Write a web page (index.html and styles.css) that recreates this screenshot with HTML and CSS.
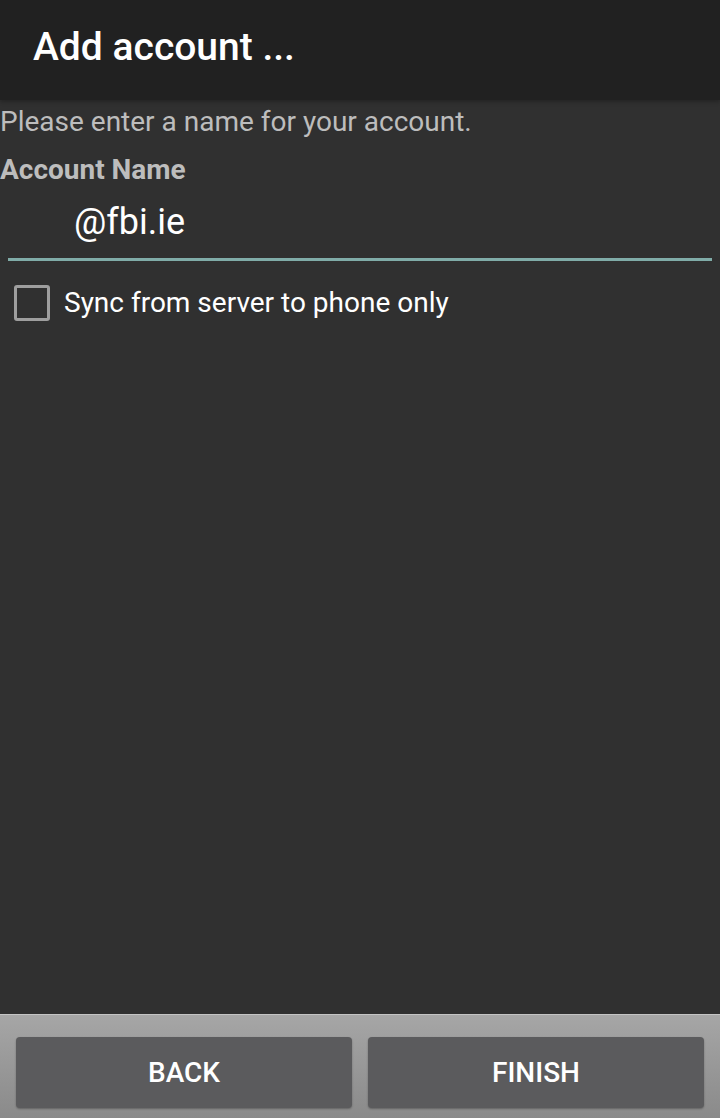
FILE: index.html
```html
<!DOCTYPE html>
<html lang="en">
<head>
    <meta charset="UTF-8">
    <meta name="viewport" content="width=device-width, initial-scale=1.0">
    <title>Add account</title>
    <link rel="stylesheet" href="styles.css">
</head>
<body>
    <div class="screen">
        <header class="app-bar">
            <h1>Add account ...</h1>
        </header>

        <main class="content">
            <p class="hint">Please enter a name for your account.</p>
            <label class="field-label" for="account-name">Account Name</label>
            <div class="field">
                <input id="account-name" class="field-input" type="text" value="@fbi.ie">
            </div>
            <label class="check-row">
                <span class="check-box"></span>
                <span class="check-text">Sync from server to phone only</span>
            </label>
        </main>

        <footer class="button-bar">
            <button class="bar-btn">BACK</button>
            <button class="bar-btn">FINISH</button>
        </footer>
    </div>
</body>
</html>
```

FILE: styles.css
```css
* {
    margin: 0;
    padding: 0;
    box-sizing: border-box;
}

html, body {
    height: 100%;
}

body {
    font-family: Roboto, 'Noto Sans', sans-serif;
    background-color: #303030;
    color: #fff;
}

.screen {
    display: flex;
    flex-direction: column;
    height: 1118px;
}

.app-bar {
    height: 100px;
    background-color: #212121;
    padding: 22px 33px 0;
    box-shadow: 0 2px 4px rgba(0,0,0,0.25);
    position: relative;
    z-index: 1;
}

.app-bar h1 {
    font-size: 39px;
    font-weight: 500;
    line-height: 50px;
    color: #fff;
}

.content {
    flex: 1;
    padding-top: 6px;
}

.hint {
    font-size: 28px;
    line-height: 32px;
    color: #bdbdbd;
}

.field-label {
    display: block;
    margin-top: 16px;
    font-size: 28px;
    font-weight: 700;
    line-height: 32px;
    color: #bdbdbd;
}

.field {
    margin: 12px 8px 0;
    border-bottom: 3px solid #80aca8;
}

.field-input {
    width: 100%;
    background: transparent;
    border: none;
    outline: none;
    color: #fff;
    font-family: inherit;
    font-size: 36px;
    line-height: 48px;
    padding: 0 0 12px 66px;
}

.check-row {
    display: flex;
    align-items: center;
    gap: 14px;
    margin-top: 24px;
    padding-left: 14px;
}

.check-box {
    width: 36px;
    height: 36px;
    border: 3px solid #9e9e9e;
    border-radius: 3px;
}

.check-text {
    font-size: 28px;
    line-height: 36px;
}

.button-bar {
    height: 104px;
    display: flex;
    gap: 16px;
    padding: 22px 16px 10px;
    background: linear-gradient(#a6a6a6, #8a8a8a);
    border-top: 1px solid #c4c4c4;
}

.bar-btn {
    flex: 1;
    background-color: #5b5b5d;
    color: #fff;
    border: none;
    border-radius: 4px;
    box-shadow: 0 1px 2px rgba(0,0,0,0.3);
    font-family: inherit;
    font-size: 28px;
    font-weight: 500;
}
```
